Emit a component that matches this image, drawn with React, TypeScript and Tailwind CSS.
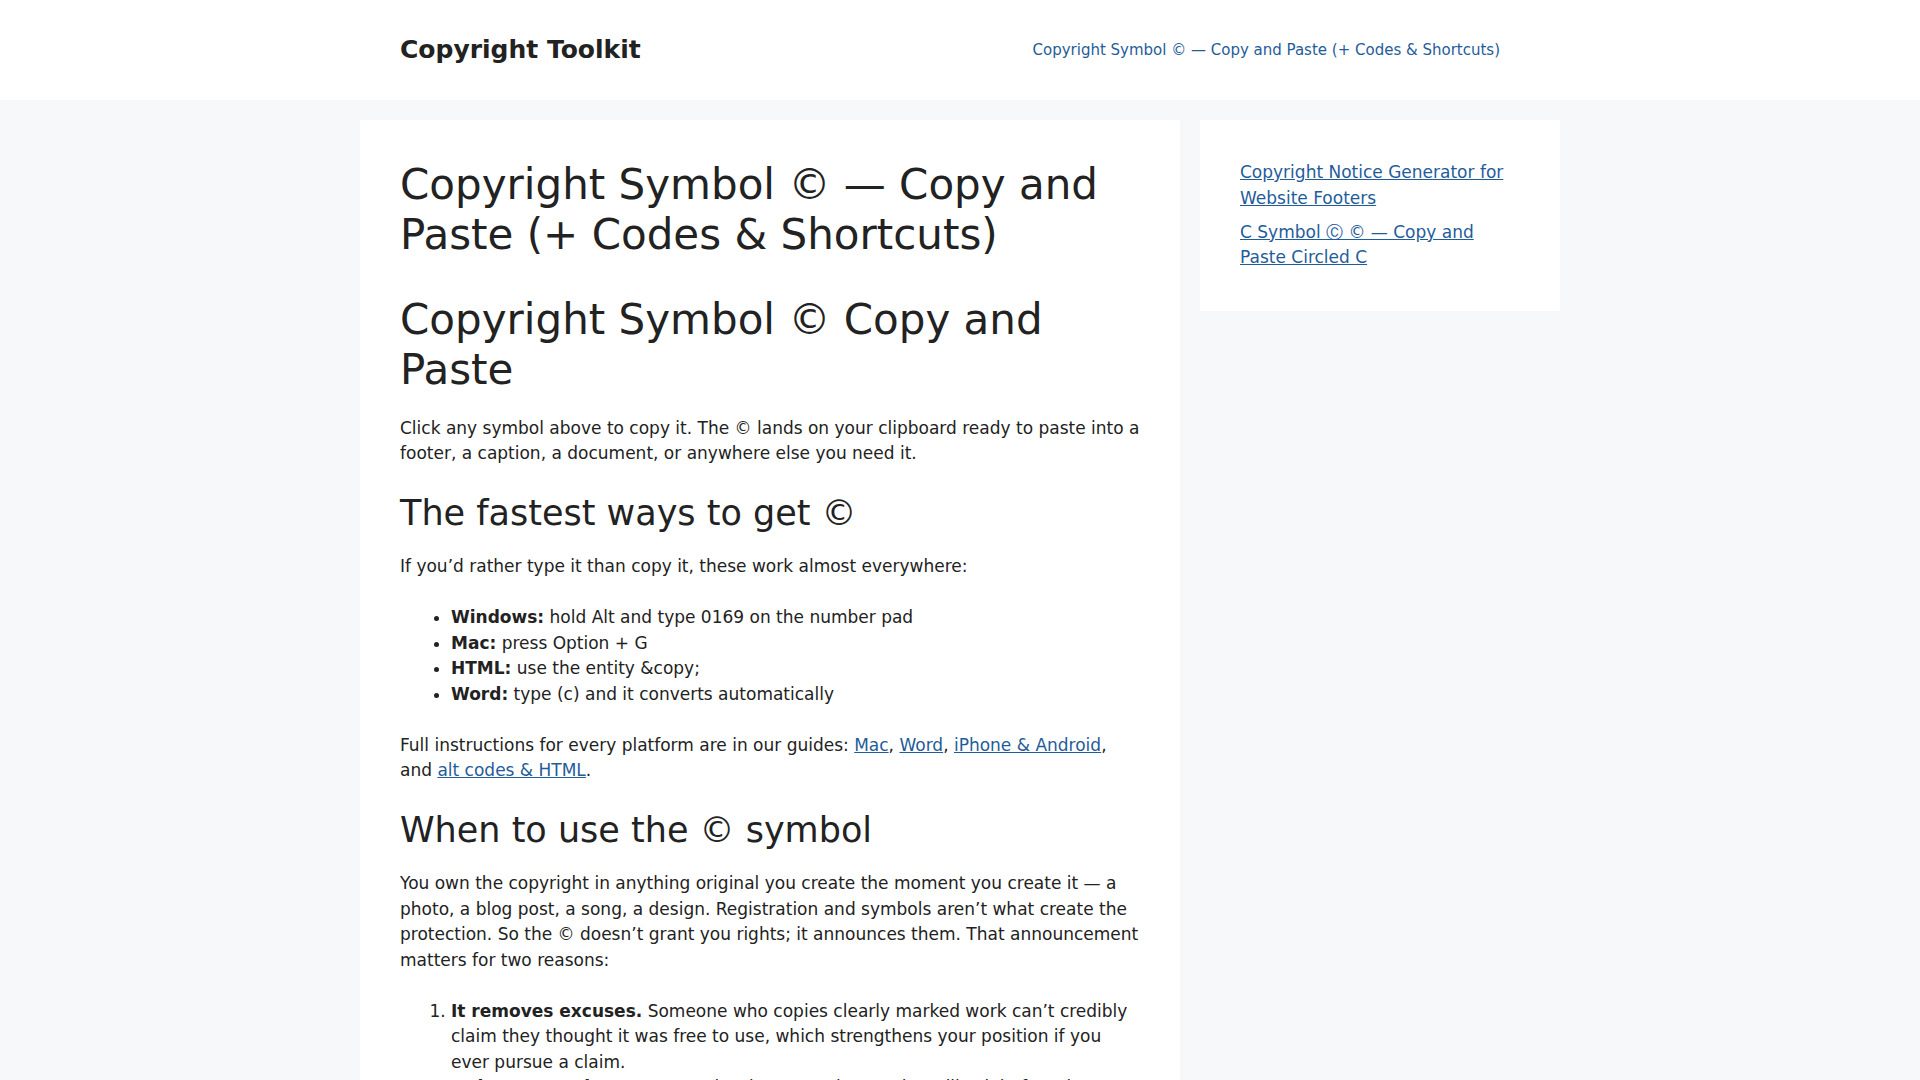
import React from "react";

const linkCls = "text-[#1f5c9a] underline";

export default function App() {
  return (
    <div className="min-h-screen bg-[#f7f8f9] text-[#222222] font-['DejaVu_Sans',sans-serif] text-[17px] leading-[1.5]">
      <header className="bg-white">
        <div className="mx-auto w-[1200px] h-[100px] px-[40px] flex items-center justify-between">
          <p className="text-[25px] font-bold leading-[1.5]">
            <a href="#" className="text-[#222222]">Copyright Toolkit</a>
          </p>
          <nav>
            <a href="#" className="block px-[20px] text-[15px] leading-[60px] text-[#1f5c9a]">
              Copyright Symbol © — Copy and Paste (+ Codes &amp; Shortcuts)
            </a>
          </nav>
        </div>
      </header>

      <div className="mx-auto w-[1200px] pt-[20px] pb-[40px] flex items-start gap-[20px]">
        <main className="w-[820px] bg-white p-[40px]">
          <h1 className="text-[42px] leading-[1.2] font-normal">
            Copyright Symbol © — Copy and Paste (+ Codes &amp; Shortcuts)
          </h1>

          <div className="mt-[34px]">
            <h2 className="text-[42px] leading-[1.2] font-normal mb-[20px]">
              Copyright Symbol © Copy and Paste
            </h2>
            <p className="mb-[1.5em]">
              Click any symbol above to copy it. The © lands on your clipboard ready to paste into a footer, a caption, a document, or anywhere else you need it.
            </p>

            <h2 className="text-[35px] leading-[1.2] font-normal mb-[20px]">The fastest ways to get ©</h2>
            <p className="mb-[1.5em]">If you’d rather type it than copy it, these work almost everywhere:</p>
            <ul className="list-disc ml-[3em] mb-[1.5em]">
              <li><strong>Windows:</strong> hold Alt and type 0169 on the number pad</li>
              <li><strong>Mac:</strong> press Option + G</li>
              <li><strong>HTML:</strong> use the entity &amp;copy;</li>
              <li><strong>Word:</strong> type (c) and it converts automatically</li>
            </ul>
            <p className="mb-[1.5em]">
              Full instructions for every platform are in our guides:{" "}
              <a href="#" className={linkCls}>Mac</a>,{" "}
              <a href="#" className={linkCls}>Word</a>,{" "}
              <a href="#" className={linkCls}>iPhone &amp; Android</a>, and{" "}
              <a href="#" className={linkCls}>alt codes &amp; HTML</a>.
            </p>

            <h2 className="text-[35px] leading-[1.2] font-normal mb-[20px]">When to use the © symbol</h2>
            <p className="mb-[1.5em]">
              You own the copyright in anything original you create the moment you create it — a photo, a blog post, a song, a design. Registration and symbols aren’t what create the protection. So the © doesn’t grant you rights; it announces them. That announcement matters for two reasons:
            </p>
            <ol className="list-decimal ml-[3em] mb-[1.5em]">
              <li>
                <strong>It removes excuses.</strong> Someone who copies clearly marked work can’t credibly claim they thought it was free to use, which strengthens your position if you ever pursue a claim.
              </li>
              <li>
                <strong>It deters copying.</strong> Most people who see a clear notice will ask before they reuse your work. And if they don’t, the notice tells them exactly who to contact.
              </li>
            </ol>

            <h2 className="text-[35px] leading-[1.2] font-normal mb-[20px]">How to write a copyright notice</h2>
            <p className="mb-[1.5em]">
              A complete notice has three parts: the © symbol, the year of first publication, and the name of the owner. For example: © 2024 Jane Smith.
            </p>
          </div>
        </main>

        <aside className="w-[360px] bg-white p-[40px]">
          <ul className="flex flex-col gap-[8.5px]">
            <li>
              <a href="#" className={linkCls}>Copyright Notice Generator for Website Footers</a>
            </li>
            <li>
              <a href="#" className={linkCls}>C Symbol Ⓒ © — Copy and Paste Circled C</a>
            </li>
          </ul>
        </aside>
      </div>
    </div>
  );
}
